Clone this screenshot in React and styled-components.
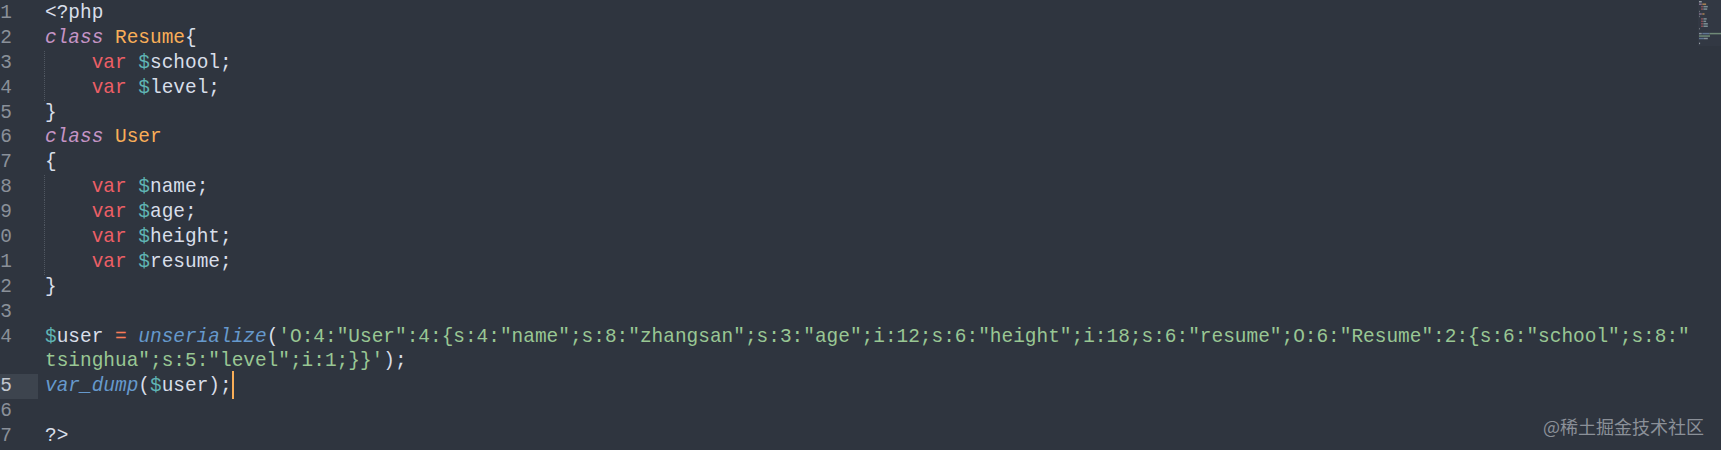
import React from "react";
import styled, { createGlobalStyle } from "styled-components";

const GlobalStyle = createGlobalStyle`
  html, body {
    margin: 0;
    padding: 0;
    background: #2f353f;
  }
  body {
    overflow: hidden;
  }
`;

const COLORS = {
  t: "#d8dee9",
  kw: "#c594c5",
  cls: "#f9ae58",
  var: "#ec5f66",
  dollar: "#5fb4b4",
  op: "#f97b58",
  fn: "#6699cc",
  str: "#99c794",
};

const Editor = styled.div`
  position: relative;
  width: 1721px;
  height: 450px;
  overflow: hidden;
  background: #2f353f;
  display: flex;
  flex-direction: column;
  padding-top: 1px;
  box-sizing: border-box;
  font-family: "Liberation Mono", "DejaVu Sans Mono", monospace;
  font-size: 19.45px;
`;

const Row = styled.div`
  display: flex;
  height: 24.9px;
  line-height: 24.9px;
  flex: none;
`;

const Num = styled.div`
  width: 38px;
  flex: none;
  display: flex;
  justify-content: flex-end;
  padding-right: 26px;
  box-sizing: border-box;
  white-space: pre;
  color: ${(p) => (p.$active ? "#c3c8d0" : "#8a9099")};
  background: ${(p) => (p.$active ? "#3d444e" : "transparent")};
`;

const Code = styled.div`
  white-space: pre;
  color: ${COLORS.t};
  border-left: 1px dotted ${(p) => (p.$guide ? "#505761" : "transparent")};
  margin-left: 6px;
`;

const Tok = styled.span`
  color: ${(p) => COLORS[p.$k]};
  font-style: ${(p) => (p.$k === "kw" || p.$k === "fn" ? "italic" : "normal")};
`;

const Caret = styled.span`
  position: relative;
  display: inline-block;
  width: 0;
  height: 0;
  &::after {
    content: "";
    position: absolute;
    left: 0;
    top: -20px;
    width: 2px;
    height: 28px;
    background: #f9ae58;
  }
`;

const Minimap = styled.svg`
  position: absolute;
  top: 0;
  right: 0;
  width: 23px;
  height: 48px;
`;

const Watermark = styled.div`
  position: absolute;
  right: 17px;
  bottom: 15px;
  font-family: "Noto Sans CJK SC", "Noto Sans", sans-serif;
  font-size: 18px;
  line-height: 18px;
  color: #8b9098;
`;

const V = (name, rest) => [
  ["t", "    "],
  ["var", "var"],
  ["t", " "],
  ["dollar", "$"],
  ["t", name + rest],
];

const lines = [
  { n: "1", toks: [["t", "<?php"]] },
  { n: "2", toks: [["kw", "class"], ["t", " "], ["cls", "Resume"], ["t", "{"]] },
  { n: "3", guide: true, toks: V("school", ";") },
  { n: "4", guide: true, toks: V("level", ";") },
  { n: "5", toks: [["t", "}"]] },
  { n: "6", toks: [["kw", "class"], ["t", " "], ["cls", "User"]] },
  { n: "7", toks: [["t", "{"]] },
  { n: "8", guide: true, toks: V("name", ";") },
  { n: "9", guide: true, toks: V("age", ";") },
  { n: "10", guide: true, toks: V("height", ";") },
  { n: "11", guide: true, toks: V("resume", ";") },
  { n: "12", toks: [["t", "}"]] },
  { n: "13", toks: [] },
  {
    n: "14",
    toks: [
      ["dollar", "$"],
      ["t", "user "],
      ["op", "="],
      ["t", " "],
      ["fn", "unserialize"],
      ["t", "("],
      [
        "str",
        `'O:4:"User":4:{s:4:"name";s:8:"zhangsan";s:3:"age";i:12;s:6:"height";i:18;s:6:"resume";O:6:"Resume":2:{s:6:"school";s:8:"`,
      ],
    ],
  },
  { n: "", toks: [["str", `tsinghua";s:5:"level";i:1;}}'`], ["t", ");"]] },
  {
    n: "15",
    active: true,
    caret: true,
    toks: [["fn", "var_dump"], ["t", "("], ["dollar", "$"], ["t", "user);"]],
  },
  { n: "16", toks: [] },
  { n: "17", toks: [["t", "?>"]] },
];

const miniRows = [
  [[0, 5, "#aeb4bc"]],
  [[0, 5, "#9a7fa0"], [6, 7, "#c7955a"]],
  [[4, 3, "#b05a62"], [8, 8, "#8fa2a8"]],
  [[4, 3, "#b05a62"], [8, 7, "#8fa2a8"]],
  [[0, 1, "#aeb4bc"]],
  [[0, 5, "#9a7fa0"], [6, 4, "#c7955a"]],
  [[0, 1, "#aeb4bc"]],
  [[4, 3, "#b05a62"], [8, 6, "#8fa2a8"]],
  [[4, 3, "#b05a62"], [8, 5, "#8fa2a8"]],
  [[4, 3, "#b05a62"], [8, 8, "#8fa2a8"]],
  [[4, 3, "#b05a62"], [8, 8, "#8fa2a8"]],
  [[0, 1, "#aeb4bc"]],
  [],
  [[0, 5, "#9aa6b0"], [6, 13, "#6b84a6"], [19, 24, "#7f9f85"]],
  [[0, 20, "#7f9f85"]],
  [[0, 9, "#6b84a6"], [9, 7, "#9aa6b0"]],
  [],
  [[0, 2, "#aeb4bc"]],
];

function MinimapDrawing() {
  return (
    <Minimap viewBox="0 0 23 48">
      <rect x="0" y="0" width="23" height="46" fill="#3a404a" opacity="0.35" />
      {miniRows.map((segs, i) =>
        segs.map(([x, w, c], j) => (
          <rect
            key={`${i}-${j}`}
            x={1 + x * 0.55}
            y={1 + i * 2.45}
            width={w * 0.55}
            height={1.5}
            fill={c}
            opacity="0.8"
          />
        ))
      )}
    </Minimap>
  );
}

export default function App() {
  return (
    <>
      <GlobalStyle />
      <Editor>
        {lines.map((ln, i) => (
          <Row key={i}>
            <Num $active={ln.active}>{ln.n}</Num>
            <Code $guide={ln.guide}>
              {ln.toks.map(([k, s], j) => (
                <Tok key={j} $k={k}>
                  {s}
                </Tok>
              ))}
              {ln.caret && <Caret />}
            </Code>
          </Row>
        ))}
        <MinimapDrawing />
        <Watermark>@稀土掘金技术社区</Watermark>
      </Editor>
    </>
  );
}
